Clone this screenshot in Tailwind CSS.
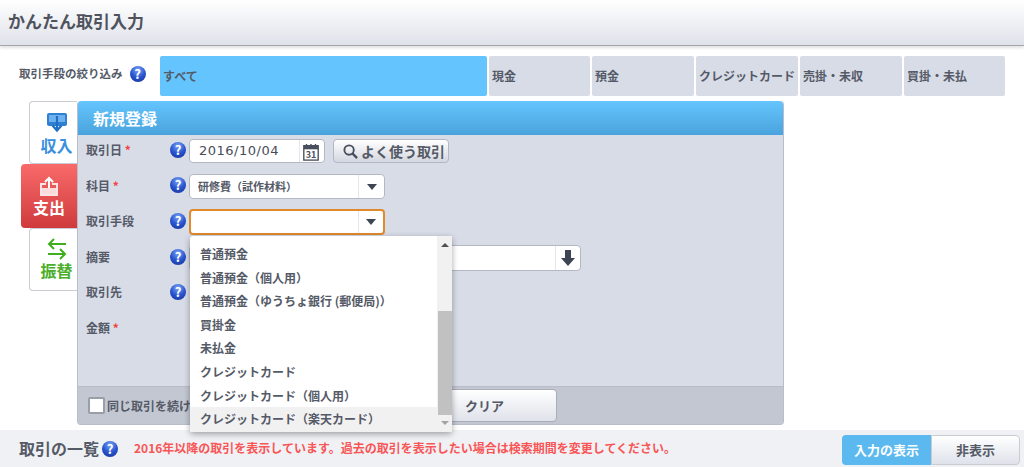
<!DOCTYPE html>
<html lang="ja">
<head>
<meta charset="utf-8">
<title>かんたん取引入力</title>
<script src="https://cdn.jsdelivr.net/npm/@tailwindcss/browser@4"></script>
</head>
<body class="w-[1024px] h-[467px] overflow-hidden bg-white text-[#555a67] font-['Noto_Sans_CJK_JP','Noto_Sans',sans-serif] flex flex-col">

  <!-- header -->
  <header class="h-[46px] shrink-0 pl-[8px] pt-[9px] bg-gradient-to-b from-white to-[#dfe2ea] border-b border-[#a4a6ac] shadow-[0_2px_3px_rgba(0,0,0,0.12)]">
    <h1 class="text-[17px] leading-[24px] font-bold text-[#4f535e]">かんたん取引入力</h1>
  </header>

  <!-- filter -->
  <div class="flex mt-[10px] h-[40px] shrink-0">
    <div class="w-[160px] pl-[19px] pb-[4px] flex items-center gap-[7px] text-[11.500px] font-bold">
      <span>取引手段の絞り込み</span>
      <span class="w-[16px] h-[16px] rounded-full bg-[radial-gradient(circle_at_50%_25%,#7aa5f5,#2a55d0_50%,#123096)] text-white text-[13px] leading-[16px] text-center font-bold">?</span>
    </div>
    <div class="flex gap-[2px] text-[12px] font-bold">
      <div class="w-[327px] pl-[3px] flex items-center rounded-[2px] bg-[#64c5fe]">すべて</div>
      <div class="w-[101px] pl-[3px] flex items-center rounded-[2px] bg-[#d8dce7]">現金</div>
      <div class="w-[102px] pl-[3px] flex items-center rounded-[2px] bg-[#d8dce7]">預金</div>
      <div class="w-[102px] pl-[3px] flex items-center rounded-[2px] bg-[#d8dce7] whitespace-nowrap">クレジットカード</div>
      <div class="w-[102px] pl-[3px] flex items-center rounded-[2px] bg-[#d8dce7]">売掛・未収</div>
      <div class="w-[101px] pl-[3px] flex items-center rounded-[2px] bg-[#d8dce7]">買掛・未払</div>
    </div>
  </div>

  <!-- form -->
  <div class="flex mt-[5px] h-[324px] shrink-0">
    <div class="w-[77px] pl-[21px] flex flex-col items-end shrink-0">
      <div class="w-[48px] h-[63px] border border-r-0 border-[#c9ccd3] rounded-l-[4px] bg-white flex flex-col items-center pt-[11px] pl-[6px] text-[#3a90de] text-[16px] leading-[18px] font-bold">
        <svg width="20" height="20" viewBox="0 0 20 20" class="mb-[3px]"><rect width="20" height="13" rx="2" fill="#2f80d3"/><rect x="2" y="2" width="16" height="7" fill="#6db2ee"/><path d="M10 3v14M5.500 12.500l4.500 5 4.500-5" fill="none" stroke="#1f6fc4" stroke-width="2.200"/></svg>
        <span>収入</span>
      </div>
      <div class="w-[56px] h-[64px] rounded-l-[4px] bg-gradient-to-b from-[#f96a6a] to-[#cf3a3d] flex flex-col items-center pt-[12px] text-white text-[16px] leading-[18px] font-bold">
        <svg width="20" height="21" viewBox="0 0 20 21" class="mb-[1px]"><path d="M10 15V2M6 6l4-4 4 4" fill="none" stroke="#fff" stroke-width="2"/><path d="M7 7H1v13h18V7h-6v2h4v9H3V9h4z" fill="#fde4e4"/><rect x="3" y="12" width="14" height="6" fill="#fbdcdc"/></svg>
        <span>支出</span>
      </div>
      <div class="w-[48px] h-[63px] border border-r-0 border-[#c9ccd3] rounded-l-[4px] bg-white flex flex-col items-center pt-[9px] pl-[6px] text-[#4aae2a] text-[16px] leading-[18px] font-bold">
        <svg width="20" height="22" viewBox="0 0 20 22" class="mb-[1px]"><path d="M19 6H2M7 1 2 6l5 5M1 16h17M13 11l5 5-5 5" fill="none" stroke="#3fae1f" stroke-width="2"/></svg>
        <span>振替</span>
      </div>
    </div>

    <div class="w-[707px] rounded-[4px] bg-[#d8dce7] border-x border-b border-[#b9bdc9] flex flex-col">
      <div class="h-[34px] shrink-0 pl-[15px] flex items-center rounded-t-[4px] bg-gradient-to-b from-[#65c5fe] to-[#4aa3dc] text-white text-[16px] font-bold">新規登録</div>

      <div class="flex-1 relative pl-[8px] text-[12px] font-bold">
        <div class="flex items-center h-[24px] mt-[4px]">
          <span class="w-[84px] pb-[2px]">取引日 <span class="text-[#f04040]">*</span></span>
          <span class="w-[16px] h-[16px] mb-[3px] rounded-full bg-[radial-gradient(circle_at_50%_25%,#7aa5f5,#2a55d0_50%,#123096)] text-white text-[13px] leading-[16px] text-center font-bold">?</span>
          <div class="ml-[3px] w-[136px] h-[24px] flex rounded-[4px] border border-[#b4b8c4] bg-white">
            <span class="w-[110px] pl-[9px] leading-[22px] border-r border-[#e4e6ec] text-[13px] tracking-[0.5px] text-[#474c58] font-['DejaVu_Sans',sans-serif] font-normal">2016/10/04</span>
            <svg width="18" height="18" viewBox="0 0 20 20" class="m-[2px] mt-[3px]"><rect x="2" y="3" width="16" height="16" fill="#fff" stroke="#4a4f5c" stroke-width="1.500"/><rect x="2" y="3" width="16" height="4" fill="#4a4f5c"/><path d="M5 1v4M10 1v4M15 1v4" stroke="#4a4f5c" stroke-width="1.500"/><text x="10" y="17" font-size="10" font-weight="700" text-anchor="middle" fill="#4a4f5c">31</text></svg>
          </div>
          <div class="ml-[8px] w-[116px] h-[24px] flex items-center pl-[9px] gap-[3px] rounded-[4px] border border-[#b4b8c4] bg-gradient-to-b from-white to-[#d4d7e0] text-[14px]">
            <svg width="15" height="15" viewBox="0 0 16 16" class="shrink-0"><circle cx="6.500" cy="6.500" r="5" fill="none" stroke="#4a4f5c" stroke-width="2"/><path d="m10 10 5 5" stroke="#4a4f5c" stroke-width="2.500"/></svg>
            <span class="whitespace-nowrap">よく使う取引</span>
          </div>
        </div>

        <div class="flex items-center h-[25px] mt-[11px]">
          <span class="w-[84px] pb-[2px]">科目 <span class="text-[#f04040]">*</span></span>
          <span class="w-[16px] h-[16px] mb-[3px] rounded-full bg-[radial-gradient(circle_at_50%_25%,#7aa5f5,#2a55d0_50%,#123096)] text-white text-[13px] leading-[16px] text-center font-bold">?</span>
          <div class="ml-[3px] w-[196px] h-[25px] flex rounded-[4px] border border-[#b4b8c4] bg-white">
            <span class="flex-1 pl-[8px] leading-[23px] text-[11px]">研修費（試作材料）</span>
            <span class="w-[26px] border-l border-[#e4e6ec] flex items-center justify-center"><span class="w-0 h-0 border-x-[5px] border-x-transparent border-t-[6px] border-t-[#3d4454]"></span></span>
          </div>
        </div>

        <div class="flex items-center h-[26px] mt-[10px]">
          <span class="w-[84px] pb-[2px]">取引手段</span>
          <span class="w-[16px] h-[16px] mb-[3px] rounded-full bg-[radial-gradient(circle_at_50%_25%,#7aa5f5,#2a55d0_50%,#123096)] text-white text-[13px] leading-[16px] text-center font-bold">?</span>
          <div class="ml-[3px] w-[196px] h-[26px] flex rounded-[4px] border-2 border-[#e08a2c] bg-white">
            <span class="flex-1"></span>
            <span class="w-[25px] border-l border-[#e4e6ec] flex items-center justify-center"><span class="w-0 h-0 border-x-[5px] border-x-transparent border-t-[6px] border-t-[#3d4454]"></span></span>
          </div>
        </div>

        <div class="flex items-center h-[26px] mt-[10px]">
          <span class="w-[84px] pb-[3px]">摘要</span>
          <span class="w-[16px] h-[16px] mb-[3px] rounded-full bg-[radial-gradient(circle_at_50%_25%,#7aa5f5,#2a55d0_50%,#123096)] text-white text-[13px] leading-[16px] text-center font-bold">?</span>
          <div class="ml-[3px] w-[392px] h-[26px] flex rounded-[4px] border border-[#b4b8c4] bg-white">
            <span class="flex-1"></span>
            <span class="w-[25px] border-l border-[#e4e6ec] flex items-center justify-center">
              <svg width="14" height="16" viewBox="0 0 14 16"><path d="M4 0h6v8h4l-7 8-7-8h4z" fill="#3d4454"/></svg>
            </span>
          </div>
        </div>

        <div class="flex items-center h-[26px] mt-[9px]">
          <span class="w-[84px] pb-[2px]">取引先</span>
          <span class="w-[16px] h-[16px] mb-[3px] rounded-full bg-[radial-gradient(circle_at_50%_25%,#7aa5f5,#2a55d0_50%,#123096)] text-white text-[13px] leading-[16px] text-center font-bold">?</span>
        </div>

        <div class="flex items-center h-[26px] mt-[9px]">
          <span class="w-[84px]">金額 <span class="text-[#f04040]">*</span></span>
        </div>

        <!-- dropdown list -->
        <div class="absolute left-[112px] top-[101px] z-10 w-[262px] h-[196px] rounded-[3px] bg-white shadow-[0_2px_6px_rgba(0,0,0,0.35)] flex text-[12px]">
          <ul class="flex-1 pt-[6px] leading-[23.600px]">
            <li class="pl-[10px]">普通預金</li>
            <li class="pl-[10px]">普通預金（個人用）</li>
            <li class="pl-[10px]">普通預金（ゆうちょ銀行 (郵便局)）</li>
            <li class="pl-[10px]">買掛金</li>
            <li class="pl-[10px]">未払金</li>
            <li class="pl-[10px]">クレジットカード</li>
            <li class="pl-[10px]">クレジットカード（個人用）</li>
            <li class="pl-[10px] bg-[#f1f1f1] h-[25px]">クレジットカード（楽天カード）</li>
          </ul>
          <div class="w-[15px] bg-[#f1f1f1] flex flex-col items-center">
            <span class="mt-[7px] w-0 h-0 border-x-[4px] border-x-transparent border-b-[4px] border-b-[#505050]"></span>
            <span class="mt-[64px] w-[14px] h-[104px] bg-[#c1c1c1]"></span>
            <span class="mt-[6px] w-0 h-0 border-x-[4px] border-x-transparent border-t-[4px] border-t-[#a3a3a3]"></span>
          </div>
        </div>
      </div>

      <div class="h-[38px] shrink-0 flex items-center pl-[10px] rounded-b-[4px] bg-[#c3c7d2] border-t border-[#b9bdc9] text-[12px] font-bold">
        <span class="w-[17px] h-[17px] border-2 border-[#9a9ea8] bg-white rounded-[2px]"></span>
        <span class="ml-[2px] w-[83px] whitespace-nowrap">同じ取引を続け</span>
        <div class="ml-[250px] w-[117px] h-[33px] flex items-center pl-[24px] rounded-[4px] border border-[#a9adb9] bg-gradient-to-b from-white to-[#dfe2ea] text-[13px]">クリア</div>
      </div>
    </div>
  </div>

  <!-- list heading -->
  <div class="mt-[5px] flex-1 flex items-start bg-[#f0f1f5] pl-[19px] pt-[5px]">
    <span class="text-[16px] leading-[26px] font-bold">取引の一覧</span>
    <span class="ml-[3px] mt-[6px] w-[16px] h-[16px] rounded-full bg-[radial-gradient(circle_at_50%_25%,#7aa5f5,#2a55d0_50%,#123096)] text-white text-[13px] leading-[16px] text-center font-bold">?</span>
    <span class="ml-[16px] text-[12px] leading-[26px] font-bold text-[#f85555]">2016年以降の取引を表示しています。過去の取引を表示したい場合は検索期間を変更してください。</span>
    <div class="ml-auto mr-[4px] flex w-[178px] h-[30px] text-[13px] font-bold">
      <span class="w-[89px] flex items-center justify-center rounded-l-[4px] bg-[#5bb9f0] text-white">入力の表示</span>
      <span class="w-[89px] flex items-center justify-center rounded-r-[4px] border border-[#c9ccd3] bg-gradient-to-b from-white to-[#dfe2ea]">非表示</span>
    </div>
  </div>
</body>
</html>
